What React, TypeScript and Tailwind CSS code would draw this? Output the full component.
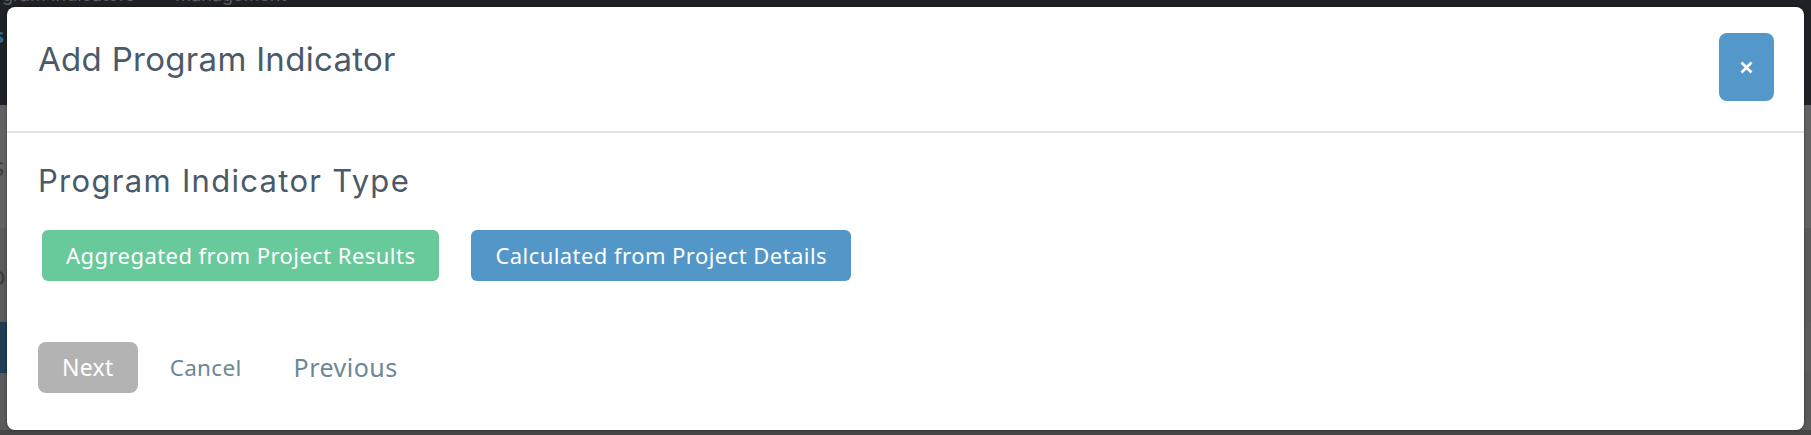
import React from "react";

export default function App() {
  return (
    <div className="relative h-[435px] w-[1811px] overflow-hidden bg-[#5b5b5b] font-['Noto_Sans',sans-serif]">
      {/* dimmed page behind the modal */}
      <div className="flex h-full flex-col">
        <div className="flex h-[105px] flex-col bg-[#1e2125]">
          <div className="-mt-[16px] h-[21px] pl-[2px] text-[18px] leading-[21px] text-[#5a5e63]">
            <span className="font-['Inter',sans-serif]">gram Indicators</span>
            <span className="ml-[40px] font-['Inter',sans-serif]">Management</span>
          </div>
          <div className="-ml-[6px] mt-[19px] text-[20px] font-bold leading-[24px] text-[#2d6b98]">s</div>
        </div>
        <div className="flex h-[123px] items-center bg-[#626262]">
          <span className="-ml-[8px] text-[26px] text-[#3e3e3e]">s</span>
        </div>
        <div className="flex h-[94px] items-center bg-[#5a5a5a]">
          <span className="-ml-[10px] text-[26px] text-[#3a3a3a]">o</span>
        </div>
        <div className="flex h-[51px]">
          <div className="w-[300px] bg-[#1f3d55]" />
          <div className="flex-1 bg-[#5c5c5c]" />
        </div>
        <div className="flex-1 bg-[#5a5a5a]" />
        <div className="h-[5px] bg-[#464646]" />
      </div>

      {/* modal */}
      <div className="absolute left-[7px] top-[7px] flex h-[423px] w-[1797px] flex-col rounded-[8px] bg-white shadow-[0_0_3px_rgba(0,0,0,0.45)]">
        <div className="flex h-[126px] items-start justify-between border-b-2 border-[#e4e4e4] pl-[31px] pr-[30px]">
          <h1 className="pt-[32px] font-['Inter',sans-serif] text-[33px] font-normal leading-[40px] tracking-[0.3px] text-[#4b5a69]">
            Add Program Indicator
          </h1>
          <button className="mt-[26px] flex h-[68px] w-[55px] items-center justify-center rounded-[8px] bg-[#5398c9]">
            <svg width="13" height="13" viewBox="0 0 13 13">
              <path d="M1.5 1.5 L11.5 11.5 M11.5 1.5 L1.5 11.5" stroke="white" strokeWidth="2.6" strokeLinecap="butt" />
            </svg>
          </button>
        </div>

        <div className="flex flex-col pl-[31px]">
          <h2 className="pt-[30px] font-['Inter',sans-serif] text-[31px] font-normal leading-[36px] tracking-[1.3px] text-[#4b5a69]">
            Program Indicator Type
          </h2>
          <div className="mt-[31px] flex gap-[32px] pl-[4px]">
            <button className="h-[51px] rounded-[6px] bg-[#68c99b] px-[24px] text-[22px] tracking-[0.45px] text-white">
              Aggregated from Project Results
            </button>
            <button className="h-[51px] rounded-[6px] bg-[#5297c8] px-[24px] text-[22px] tracking-[0.45px] text-white">
              Calculated from Project Details
            </button>
          </div>
          <div className="mt-[61px] flex items-center">
            <button className="h-[51px] rounded-[8px] bg-[#b3b3b3] px-[24px] text-[23px] tracking-[0.3px] text-white">Next</button>
            <span className="ml-[32px] text-[22.5px] tracking-[0.3px] text-[#6b8897]">Cancel</span>
            <span className="ml-[52px] text-[25px] tracking-[0.5px] text-[#6b8897]">Previous</span>
          </div>
        </div>
      </div>
    </div>
  );
}
